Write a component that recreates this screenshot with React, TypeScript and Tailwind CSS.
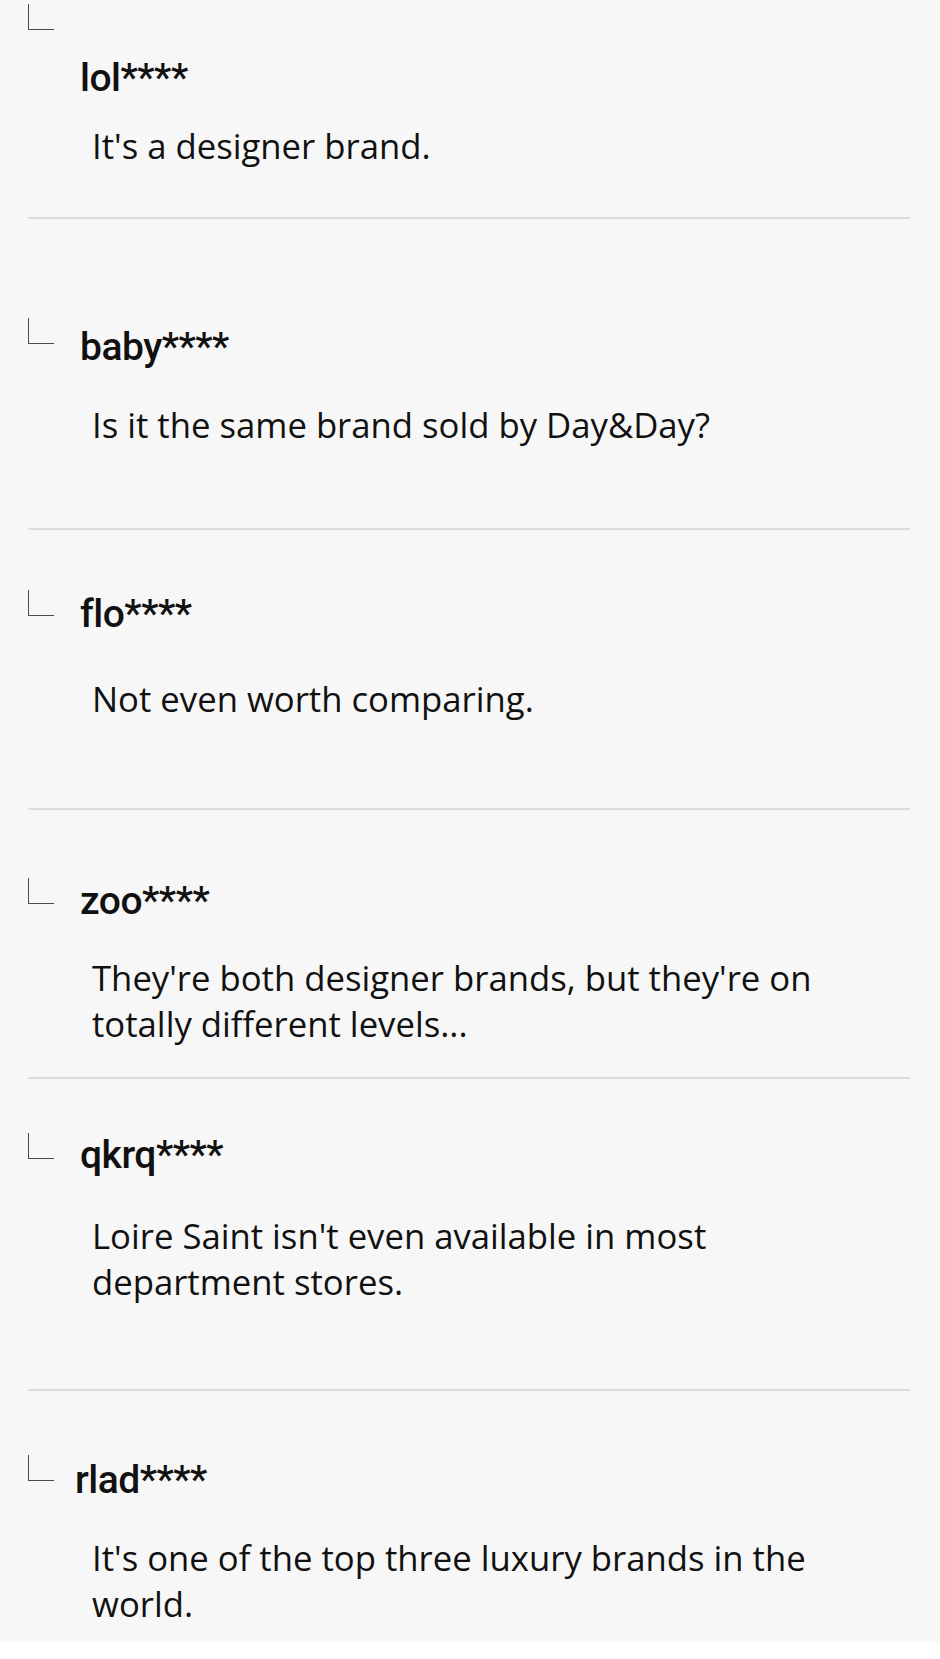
import React from 'react';

type Reply = {
  name: string;
  body: string;
  pad: string;
  cornerTop: string;
  nameTop: string;
  nameLeft: string;
  bodyTop: string;
  sepTop?: string;
};

const replies: Reply[] = [
  {
    name: 'lol****',
    body: "It's a designer brand.",
    pad: 'pt-0',
    cornerTop: 'mt-[4px]',
    nameTop: 'mt-[55px]',
    nameLeft: 'ml-[26px]',
    bodyTop: 'mt-[22px]',
    sepTop: 'mt-[48px]',
  },
  {
    name: 'baby****',
    body: 'Is it the same brand sold by Day&Day?',
    pad: 'pt-[99px]',
    cornerTop: 'mt-0',
    nameTop: 'mt-[6px]',
    nameLeft: 'ml-[26px]',
    bodyTop: 'mt-[32px]',
    sepTop: 'mt-[80px]',
  },
  {
    name: 'flo****',
    body: 'Not even worth comparing.',
    pad: 'pt-[60px]',
    cornerTop: 'mt-0',
    nameTop: 'mt-[1px]',
    nameLeft: 'ml-[26px]',
    bodyTop: 'mt-[39px]',
    sepTop: 'mt-[86px]',
  },
  {
    name: 'zoo****',
    body: "They're both designer brands, but they're on totally different levels...",
    pad: 'pt-[68px]',
    cornerTop: 'mt-0',
    nameTop: 'mt-0',
    nameLeft: 'ml-[26px]',
    bodyTop: 'mt-[31px]',
    sepTop: 'mt-[30px]',
  },
  {
    name: 'qkrq****',
    body: "Loire Saint isn't even available in most department stores.",
    pad: 'pt-[53px]',
    cornerTop: 'mt-[1px]',
    nameTop: 'mt-0',
    nameLeft: 'ml-[26px]',
    bodyTop: 'mt-[35px]',
    sepTop: 'mt-[84px]',
  },
  {
    name: 'rlad****',
    body: "It's one of the top three luxury brands in the world.",
    pad: 'pt-[64px] pb-[15px]',
    cornerTop: 'mt-0',
    nameTop: 'mt-[2px]',
    nameLeft: 'ml-[21px]',
    bodyTop: 'mt-[32px]',
  },
];

function ReplyItem({ r }: { r: Reply }) {
  return (
    <section className={r.pad}>
      <div className="flex items-start pl-[28px]">
        <span
          className={`block h-[26px] w-[26px] shrink-0 border-b-[1.5px] border-l-[1.5px] border-[#4a4a4a] ${r.cornerTop}`}
        />
        <span
          className={`text-[39px] font-medium leading-[46px] tracking-[-0.5px] text-[#111] ${r.nameTop} ${r.nameLeft}`}
          style={{ fontFamily: 'Roboto, "Noto Sans", sans-serif' }}
        >
          {r.name}
        </span>
      </div>
      <p
        className={`pl-[92px] pr-[60px] text-[34.7px] leading-[46px] text-[#111] ${r.bodyTop}`}
        style={{ fontFamily: '"Open Sans", "Noto Sans", sans-serif' }}
      >
        {r.body}
      </p>
      {r.sepTop && <div className={`ml-[28px] mr-[30px] h-[2px] bg-[#dddddd] ${r.sepTop}`} />}
    </section>
  );
}

export default function App() {
  return (
    <div className="min-h-screen bg-white">
      <div className="bg-[#f7f7f7]">
        {replies.map((r) => (
          <ReplyItem key={r.name} r={r} />
        ))}
      </div>
    </div>
  );
}
